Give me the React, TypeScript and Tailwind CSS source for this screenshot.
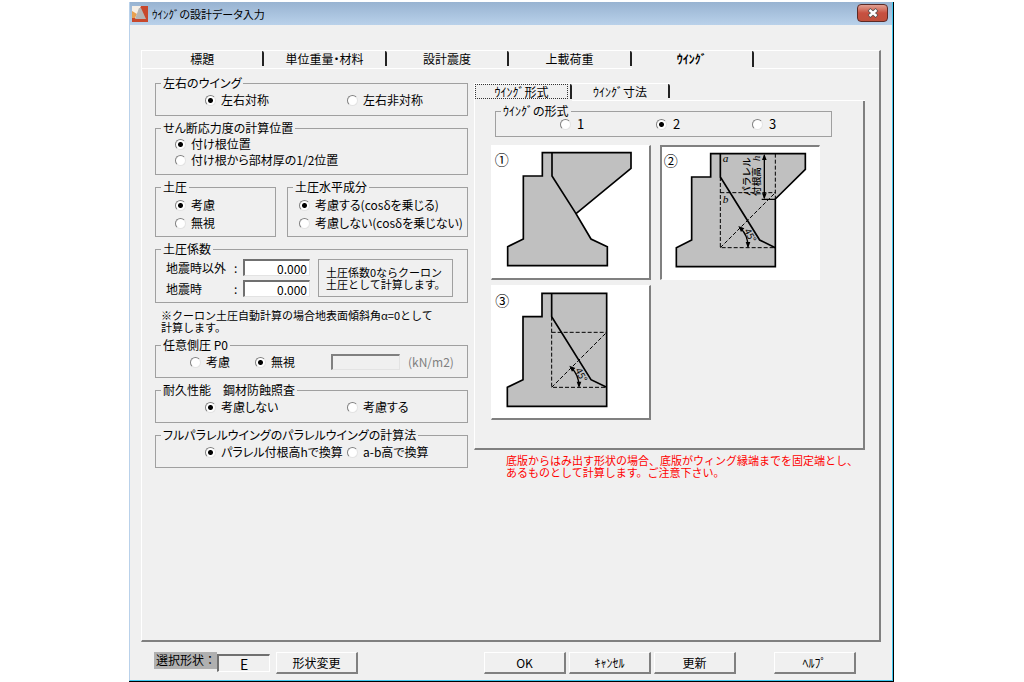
import React, { useState } from 'react'

const tabs = ['標題', '単位重量・材料', '設計震度', '上載荷重', 'ｳｲﾝｸﾞ']

function Radio({ name, label, checked, className = '' }: { name: string; label: string; checked?: boolean; className?: string }) {
  return (
    <label className={`flex items-center gap-[5px] whitespace-nowrap ${className}`}>
      <input
        type="radio"
        name={name}
        defaultChecked={checked}
        className="h-[11px] w-[11px] shrink-0 appearance-none rounded-full border border-t-[#808080] border-r-[#e3e3e3] border-b-[#e3e3e3] border-l-[#808080] bg-white checked:bg-[radial-gradient(circle,#000_2px,#fff_3px)]"
      />
      <span>{label}</span>
    </label>
  )
}

function Group({ title, className = '', children }: { title: string; className?: string; children: React.ReactNode }) {
  return (
    <fieldset className={`min-w-0 border border-[#a0a0a0] ${className}`}>
      <legend className="ml-[5px] px-0.5 leading-3 whitespace-nowrap">{title}</legend>
      {children}
    </fieldset>
  )
}

function PushButton({ children, className = '' }: { children: React.ReactNode; className?: string }) {
  return (
    <button type="button" className={`h-[22px] w-[82px] border border-r-2 border-b-2 border-t-white border-l-white border-r-[#808080] border-b-[#808080] ${className}`}>
      {children}
    </button>
  )
}

function Arrow45() {
  return (
    <>
      <path d="M256 264 Q279 286 279 320" fill="none" stroke="#000" strokeWidth="4" />
      <path d="M250 258 L268 265 L258 276 Z M279 325 L272 306 L286 306 Z" fill="#000" />
      <text x="266" y="272" fontSize="29" transform="rotate(62 266 272)">45°</text>
    </>
  )
}

function Shape1() {
  return (
    <svg viewBox="21 18 471 396" className="block h-full w-full">
      <g fill="#c0c0c0" stroke="#000" strokeWidth="5">
        <path d="M172 38 H438 V85 L273 221 L318 297 L367 320 V377 H68 V320 L115 297 V108 H172 Z" />
        <path d="M201 38 V108 L273 221" fill="none" />
      </g>
      <text x="29" y="76" fontSize="42">①</text>
    </svg>
  )
}

function Shape2() {
  return (
    <svg viewBox="21 21 471 396" className="block h-full w-full">
      <g fill="#c0c0c0" stroke="#000" strokeWidth="5">
        <path d="M167 41 H451 V88 L361 177 V380 H64 V323 L110 300 V111 H167 Z" />
        <path d="M196 41 V111 L314 300 L361 323" fill="none" />
      </g>
      <g fill="none" stroke="#000" strokeWidth="3" strokeDasharray="12 6">
        <path d="M196 111 V323 H361" />
        <path d="M196 158 H361" />
        <path d="M361 41 V177" />
        <path d="M196 323 L361 158" />
      </g>
      <path d="M328 46 V174 M320 178 H361" stroke="#000" strokeWidth="4" />
      <path d="M328 42 L321 60 H335 Z M328 178 L321 160 H335 Z" />
      <Arrow45 />
      <text x="26" y="79" fontSize="42">②</text>
      <g fontSize="34" fontStyle="italic" fontFamily="Liberation Serif, serif">
        <text x="203" y="65">a</text>
        <text x="203" y="188">b</text>
        <text x="315" y="64" transform="rotate(-90 315 64)">h</text>
      </g>
      <g fontSize="29" fontWeight="500" className="[font-feature-settings:normal]">
        <text x="285" y="168" transform="rotate(-90 285 168)">パラレル</text>
        <text x="316" y="168" transform="rotate(-90 316 168)">付根高</text>
      </g>
    </svg>
  )
}

function Shape3() {
  return (
    <svg viewBox="21 18 471 396" className="block h-full w-full">
      <g fill="#c0c0c0" stroke="#000" strokeWidth="5">
        <path d="M171 40 H365 V379 H67 V322 L114 299 V110 H171 Z" />
        <path d="M200 40 V110 L318 299 L365 322" fill="none" />
      </g>
      <g fill="none" stroke="#000" strokeWidth="3" strokeDasharray="12 6">
        <path d="M200 110 V322 H365" />
        <path d="M200 157 H365" />
        <path d="M200 322 L365 157" />
      </g>
      <g transform="translate(3 -1)">
        <Arrow45 />
      </g>
      <text x="31" y="78" fontSize="42">③</text>
    </svg>
  )
}

const shapes = [Shape1, Shape2, Shape3]

export default function App() {
  const [shape, setShape] = useState(1)

  return (
    <div className="flex min-h-screen flex-col bg-white pt-0.5 pr-[130px] pl-[129px] font-['Noto_Sans_CJK_JP',sans-serif] text-[12px] leading-4 text-black [font-feature-settings:'palt']">
      <div className="flex flex-1 flex-col border-r border-b border-black">
        <div className="flex flex-1 flex-col border-r border-b border-l border-r-[#3fc8f0] border-b-[#3fc8f0] border-l-[#b9d1ea] bg-[#f0f0f0]">
          <header className="flex h-[23px] items-start bg-linear-to-b from-[#98b3d1] to-[#b9d1ea] pr-1 pl-0.5">
            <svg viewBox="0 0 16 16" className="mt-1 h-4 w-4">
              <rect width="16" height="16" fill="#c8482c" />
              <path d="M0 0 H9 L4 12 H0 Z" fill="#f6efe6" />
              <path d="M0 5 L5 8 L3 12 H0 Z" fill="#e8a050" />
              <path d="M7 2 H9 L14 13 H3 Z" fill="#b4b4b4" />
              <path d="M0 13 H16 V16 H0 Z" fill="#c8482c" />
            </svg>
            <h1 className="mt-1 ml-1 flex-1 text-[11px]">ｳｲﾝｸﾞの設計データ入力</h1>
            <button type="button" aria-label="閉じる" className="mt-0.5 flex h-[18px] w-[31px] items-center justify-center rounded-sm border border-[#5c2a26] bg-linear-to-b from-[#e0a093] via-[#c75040] to-[#c0503c]">
              <svg viewBox="0 0 12 10" className="h-2.5 w-3">
                <path d="M2 1.5 L10 8.5 M10 1.5 L2 8.5" stroke="#54504f" strokeWidth="4" />
                <path d="M2.5 2 L9.5 8 M9.5 2 L2.5 8" stroke="#fff" strokeWidth="2.4" />
              </svg>
            </button>
          </header>

          <main className="mt-[25px] mr-[11px] ml-[11px] flex flex-1 flex-col border border-r-2 border-b-2 border-t-white border-r-[#808080] border-b-[#808080] border-l-white">
            <nav className="flex h-[18px]">
              {tabs.map((tab, i) => (
                <div key={tab} className={`flex flex-1 ${i === 4 ? '' : 'border-b border-white'}`}>
                  <button type="button" className={`mb-0.5 flex-1 rounded-tr-xs border-r-2 border-[#222] ${i === 4 ? 'font-bold' : ''}`}>
                    {tab}
                  </button>
                </div>
              ))}
              <div className="w-[125px] border-b border-white" />
            </nav>

            <div className="flex gap-1.5 pt-2 pr-3.5 pl-[13px]">
              <form className="flex w-[313px] shrink-0 flex-col gap-1.5">
                <Group title="左右のウイング" className="pt-[3px] pb-[7px]">
                  <div className="grid grid-cols-[142px_1fr] pl-[49px]">
                    <Radio name="symmetry" label="左右対称" checked />
                    <Radio name="symmetry" label="左右非対称" />
                  </div>
                </Group>

                <Group title="せん断応力度の計算位置" className="pt-0.5 pb-1.5">
                  <div className="pl-[19px]">
                    <Radio name="shear" label="付け根位置" checked />
                    <Radio name="shear" label="付け根から部材厚の1/2位置" />
                  </div>
                </Group>

                <div className="flex gap-[11px] leading-[18px]">
                  <Group title="土圧" className="w-[121px] pt-[3px] pb-1">
                    <div className="pl-[19px]">
                      <Radio name="pressure" label="考慮" checked />
                      <Radio name="pressure" label="無視" />
                    </div>
                  </Group>
                  <Group title="土圧水平成分" className="flex-1 pt-[3px] pb-1">
                    <div className="pl-[11px]">
                      <Radio name="horizontal" label="考慮する(cosδを乗じる)" checked />
                      <Radio name="horizontal" label="考慮しない(cosδを乗じない)" />
                    </div>
                  </Group>
                </div>

                <Group title="土圧係数" className="pt-1 pb-[5px]">
                  <div className="flex pr-3.5 pl-2.5">
                    <div className="flex flex-col gap-1">
                      {['地震時以外', '地震時'].map((label) => (
                        <label key={label} className="flex h-[17px] items-center">
                          <span className="w-[68px]">{label}</span>
                          <span className="w-[9px]">:</span>
                          <input
                            type="text"
                            defaultValue="0.000"
                            className="h-[17px] w-[67px] border border-t-2 border-l-2 border-t-[#707070] border-r-[#e3e3e3] border-b-[#e3e3e3] border-l-[#707070] bg-white pr-0.5 text-right leading-3"
                          />
                        </label>
                      ))}
                    </div>
                    <p className="ml-2 h-[38px] flex-1 border border-[#a0a0a0] pt-1.5 pl-[7px] text-[11px] leading-3 whitespace-nowrap [font-feature-settings:normal]">
                      土圧係数0ならクーロン
                      <br />
                      土圧として計算します。
                    </p>
                  </div>
                </Group>

                <p className="pl-1.5 text-[11px] leading-3 whitespace-nowrap [font-feature-settings:normal]">
                  ※クーロン土圧自動計算の場合地表面傾斜角α=0として
                  <br />
                  計算します。
                </p>

                <Group title="任意側圧 P0" className="pt-[3px] pb-[7px]">
                  <div className="flex items-center pl-[34px]">
                    <Radio name="lateral" label="考慮" className="w-[65px]" />
                    <Radio name="lateral" label="無視" checked className="w-[76px]" />
                    <label className="flex items-center gap-2 text-[#808080]">
                      <input
                        type="text"
                        disabled
                        className="h-4 w-[69px] border border-t-2 border-l-2 border-t-[#808080] border-r-[#e3e3e3] border-b-[#e3e3e3] border-l-[#808080]"
                      />
                      (kN/m2)
                    </label>
                  </div>
                </Group>

                <Group title="耐久性能　鋼材防蝕照査" className="pt-[3px] pb-[7px]">
                  <div className="grid grid-cols-[142px_1fr] pl-[49px]">
                    <Radio name="durability" label="考慮しない" checked />
                    <Radio name="durability" label="考慮する" />
                  </div>
                </Group>

                <Group title="フルパラレルウイングのパラレルウイングの計算法" className="pt-[3px] pb-[7px]">
                  <div className="grid grid-cols-[142px_1fr] pl-[49px]">
                    <Radio name="parallel" label="パラレル付根高hで換算" checked />
                    <Radio name="parallel" label="a-b高で換算" />
                  </div>
                </Group>
              </form>

              <section className="min-w-0 flex-1 pt-1.5">
                <div className="flex h-[18px] border-l border-white">
                  <div className="flex w-[97px] border-t border-white">
                    <button type="button" className="mb-0.5 flex-1 rounded-tr-xs border-r-2 border-[#222] pr-0.5">
                      <span className="block border border-dotted border-[#333] leading-[13px]">ｳｲﾝｸﾞ形式</span>
                    </button>
                  </div>
                  <div className="flex w-[98px] border-y border-white">
                    <button type="button" className="mb-0.5 flex-1 rounded-tr-xs border-r-2 border-[#222]">
                      ｳｲﾝｸﾞ寸法
                    </button>
                  </div>
                  <div className="flex-1 border-b border-white" />
                </div>

                <div className="border-r-2 border-b-2 border-l border-r-[#808080] border-b-[#808080] border-l-white pt-1 pb-7">
                  <Group title="ｳｲﾝｸﾞの形式" className="mr-[31px] ml-5 pb-[5px]">
                    <div className="grid grid-cols-[96px_96px_1fr] pl-16 leading-[14px]">
                      {['1', '2', '3'].map((n, i) => (
                        <label key={n} className="flex items-center gap-1.5 text-[13px]">
                          <input
                            type="radio"
                            name="shape"
                            checked={shape === i}
                            onChange={() => setShape(i)}
                            className="h-[11px] w-[11px] appearance-none rounded-full border border-t-[#808080] border-r-[#e3e3e3] border-b-[#e3e3e3] border-l-[#808080] bg-white checked:bg-[radial-gradient(circle,#000_2px,#fff_3px)]"
                          />
                          {n}
                        </label>
                      ))}
                    </div>
                  </Group>

                  <div className="mt-2 ml-4 grid grid-cols-[160px_160px] gap-x-[9px] gap-y-[5px]">
                    {shapes.map((Shape, i) => (
                      <button
                        key={i}
                        type="button"
                        aria-label={`${i + 1}`}
                        onClick={() => setShape(i)}
                        className={`h-[135px] border bg-white ${
                          shape === i
                            ? 'border-t-2 border-l-2 border-t-[#808080] border-r-white border-b-white border-l-[#808080]'
                            : 'border-r-2 border-b-2 border-t-white border-r-[#808080] border-b-[#808080] border-l-white'
                        }`}
                      >
                        <Shape />
                      </button>
                    ))}
                  </div>
                </div>

                <p className="mt-1 pl-8 text-[11px] leading-3 whitespace-nowrap text-[#ff0000] [font-feature-settings:normal]">
                  底版からはみ出す形状の場合、底版がウィング縁端までを固定端とし、
                  <br />
                  あるものとして計算します。ご注意下さい。
                </p>
              </section>
            </div>
          </main>

          <footer className="flex items-start pt-2.5 pr-9 pb-1.5 pl-6">
            <label className="flex">
              <span className="h-[17px] w-[63px] bg-[#b0b0b0] pl-0.5 whitespace-nowrap [font-feature-settings:normal]">選択形状：</span>
              <input
                type="text"
                readOnly
                value="E"
                className="mt-0.5 h-[18px] w-[53px] border border-t-2 border-l-2 border-t-[#707070] border-r-white border-b-white border-l-[#707070] bg-[#f0f0f0] text-center text-[14px]"
              />
            </label>
            <PushButton className="ml-1.5">形状変更</PushButton>
            <div className="ml-auto flex gap-[3px]">
              <PushButton>OK</PushButton>
              <PushButton>ｷｬﾝｾﾙ</PushButton>
              <PushButton>更新</PushButton>
            </div>
            <PushButton className="ml-[38px]">ﾍﾙﾌﾟ</PushButton>
          </footer>
        </div>
      </div>
    </div>
  )
}
